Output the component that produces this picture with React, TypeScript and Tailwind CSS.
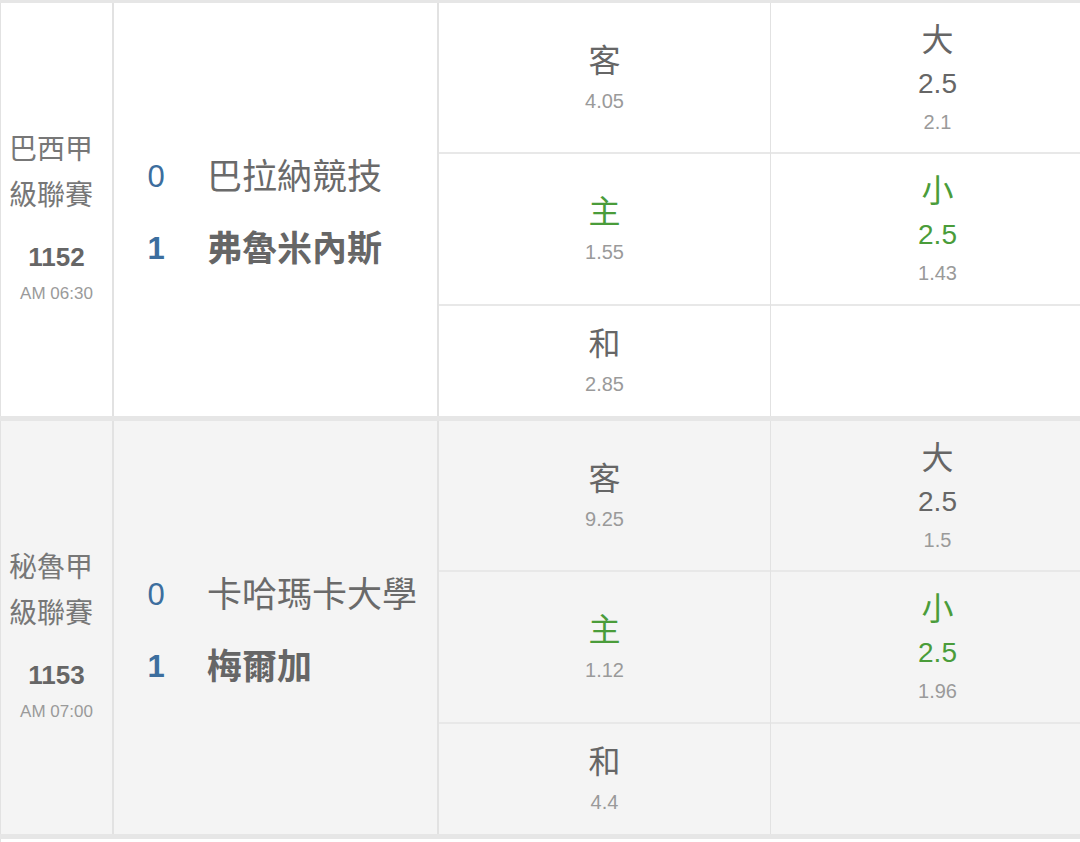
import React from 'react';

type Match = {
  league: string;
  no: string;
  time: string;
  away: string;
  home: string;
  awayScore: number;
  homeScore: number;
  odds: { away: string; home: string; draw: string };
  ou: { line: string; over: string; under: string };
  bg: string;
};

const matches: Match[] = [
  {
    league: '巴西甲級聯賽',
    no: '1152',
    time: 'AM 06:30',
    away: '巴拉納競技',
    home: '弗魯米內斯',
    awayScore: 0,
    homeScore: 1,
    odds: { away: '4.05', home: '1.55', draw: '2.85' },
    ou: { line: '2.5', over: '2.1', under: '1.43' },
    bg: 'bg-white',
  },
  {
    league: '秘魯甲級聯賽',
    no: '1153',
    time: 'AM 07:00',
    away: '卡哈瑪卡大學',
    home: '梅爾加',
    awayScore: 0,
    homeScore: 1,
    odds: { away: '9.25', home: '1.12', draw: '4.4' },
    ou: { line: '2.5', over: '1.5', under: '1.96' },
    bg: 'bg-[#f4f4f4]',
  },
];

const OddCell: React.FC<{ label: string; value: string; green?: boolean; className?: string }> = ({ label, value, green, className }) => (
  <div className={`flex flex-col items-center justify-center ${className ?? ''}`}>
    <div className={`text-[32px] leading-[36px] ${green ? 'text-[#4a9c3a]' : 'text-[#666]'}`}>{label}</div>
    <div className="text-[20px] leading-[24px] mt-[10px] text-[#9a9a9a]">{value}</div>
  </div>
);

const OuCell: React.FC<{ label: string; line: string; value: string; green?: boolean; className?: string }> = ({ label, line, value, green, className }) => (
  <div className={`flex flex-col items-center justify-center pl-[24px] ${className ?? ''}`}>
    <div className={`text-[32px] leading-[36px] ${green ? 'text-[#4a9c3a]' : 'text-[#666]'}`}>{label}</div>
    <div className={`text-[28px] leading-[32px] mt-[10px] ${green ? 'text-[#4a9c3a]' : 'text-[#666]'}`}>{line}</div>
    <div className="text-[20px] leading-[24px] mt-[10px] text-[#9a9a9a]">{value}</div>
  </div>
);

const MatchRow: React.FC<{ m: Match }> = ({ m }) => (
  <div className={`flex h-[418px] border-b-[5px] border-[#e6e6e6] ${m.bg}`}>
    {/* league */}
    <div className="w-[114px] shrink-0 border-l border-r-2 border-[#e2e2e2] flex flex-col justify-center pt-[14px]">
      <div className="px-[8px] text-[28px] leading-[46px] text-[#777]">{m.league}</div>
      <div className="mt-[22px] text-center text-[26px] leading-[32px] font-semibold text-[#666]">{m.no}</div>
      <div className="mt-[9px] text-center text-[17px] leading-[24px] text-[#9a9a9a]">{m.time}</div>
    </div>
    {/* teams */}
    <div className="w-[325px] shrink-0 border-r-2 border-[#e2e2e2] flex flex-col justify-center pt-[6px]">
      <div className="flex items-center leading-[72px]">
        <div className="w-[84px] text-center text-[31px] text-[#3c6e9e]">{m.awayScore}</div>
        <div className="ml-[9px] text-[35px] text-[#6a6a6a]">{m.away}</div>
      </div>
      <div className="flex items-center leading-[72px]">
        <div className="w-[84px] text-center text-[31px] font-bold text-[#3c6e9e]">{m.homeScore}</div>
        <div className="ml-[9px] text-[35px] font-bold text-[#666]">{m.home}</div>
      </div>
    </div>
    {/* 1x2 */}
    <div className="w-[332px] shrink-0 border-r border-[#e2e2e2] flex flex-col">
      <OddCell label="客" value={m.odds.away} className="h-[151px] border-b-2 border-[#e8e8e8]" />
      <OddCell label="主" value={m.odds.home} green className="h-[152px] border-b-2 border-[#e8e8e8]" />
      <OddCell label="和" value={m.odds.draw} className="flex-1" />
    </div>
    {/* over / under */}
    <div className="flex-1 flex flex-col">
      <OuCell label="大" line={m.ou.line} value={m.ou.over} className="h-[151px] border-b-2 border-[#e8e8e8]" />
      <OuCell label="小" line={m.ou.line} value={m.ou.under} green className="h-[152px] border-b-2 border-[#e8e8e8]" />
      <div className="flex-1" />
    </div>
  </div>
);

export default function App() {
  return (
    <div
      className="w-[1080px] h-[842px] overflow-hidden bg-white"
      style={{ fontFamily: '"Liberation Sans", "Noto Sans CJK TC", sans-serif' }}
    >
      <div className="border-t-[3px] border-[#e6e6e6]">
        {matches.map((m) => (
          <MatchRow key={m.no} m={m} />
        ))}
        <div className="h-[20px] border-l border-[#e2e2e2] bg-white" />
      </div>
    </div>
  );
}
